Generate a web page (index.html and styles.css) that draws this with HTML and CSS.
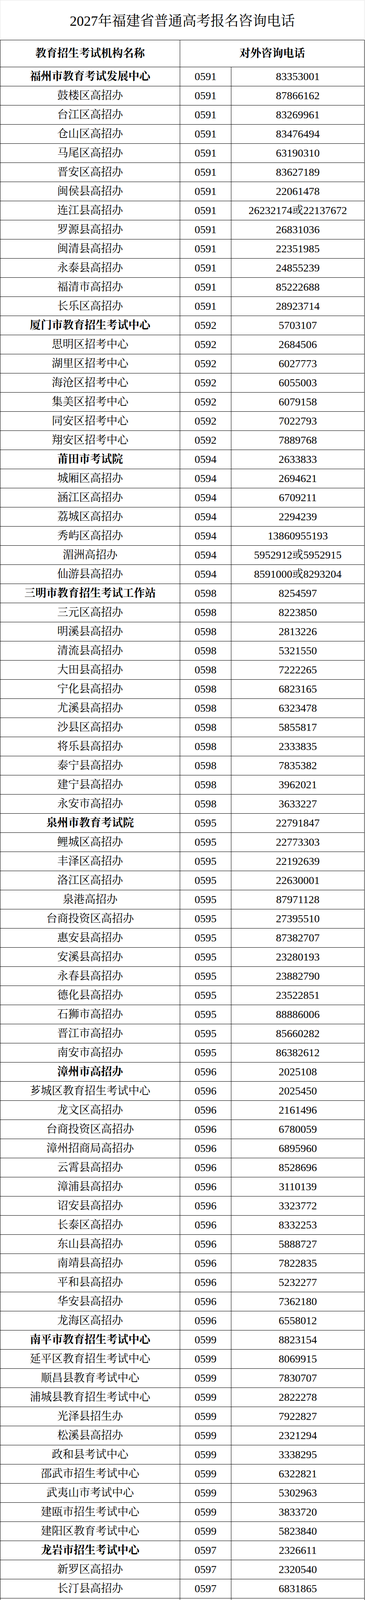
FILE: index.html
```html
<!DOCTYPE html>
<html lang="zh-CN">
<head>
<meta charset="utf-8">
<title>2027年福建省普通高考报名咨询电话</title>
<link rel="stylesheet" href="styles.css">
</head>
<body>
<div class="sheet">
  <div class="title">2027年福建省普通高考报名咨询电话</div>
  <div class="grid">
    <div class="cell head">教育招生考试机构名称</div><div class="cell head span2">对外咨询电话</div>
    <div class="cell b">福州市教育考试发展中心</div><div class="cell">0591</div><div class="cell">83353001</div>
    <div class="cell">鼓楼区高招办</div><div class="cell">0591</div><div class="cell">87866162</div>
    <div class="cell">台江区高招办</div><div class="cell">0591</div><div class="cell">83269961</div>
    <div class="cell">仓山区高招办</div><div class="cell">0591</div><div class="cell">83476494</div>
    <div class="cell">马尾区高招办</div><div class="cell">0591</div><div class="cell">63190310</div>
    <div class="cell">晋安区高招办</div><div class="cell">0591</div><div class="cell">83627189</div>
    <div class="cell">闽侯县高招办</div><div class="cell">0591</div><div class="cell">22061478</div>
    <div class="cell">连江县高招办</div><div class="cell">0591</div><div class="cell">26232174或22137672</div>
    <div class="cell">罗源县高招办</div><div class="cell">0591</div><div class="cell">26831036</div>
    <div class="cell">闽清县高招办</div><div class="cell">0591</div><div class="cell">22351985</div>
    <div class="cell">永泰县高招办</div><div class="cell">0591</div><div class="cell">24855239</div>
    <div class="cell">福清市高招办</div><div class="cell">0591</div><div class="cell">85222688</div>
    <div class="cell">长乐区高招办</div><div class="cell">0591</div><div class="cell">28923714</div>
    <div class="cell b">厦门市教育招生考试中心</div><div class="cell">0592</div><div class="cell">5703107</div>
    <div class="cell">思明区招考中心</div><div class="cell">0592</div><div class="cell">2684506</div>
    <div class="cell">湖里区招考中心</div><div class="cell">0592</div><div class="cell">6027773</div>
    <div class="cell">海沧区招考中心</div><div class="cell">0592</div><div class="cell">6055003</div>
    <div class="cell">集美区招考中心</div><div class="cell">0592</div><div class="cell">6079158</div>
    <div class="cell">同安区招考中心</div><div class="cell">0592</div><div class="cell">7022793</div>
    <div class="cell">翔安区招考中心</div><div class="cell">0592</div><div class="cell">7889768</div>
    <div class="cell b">莆田市考试院</div><div class="cell">0594</div><div class="cell">2633833</div>
    <div class="cell">城厢区高招办</div><div class="cell">0594</div><div class="cell">2694621</div>
    <div class="cell">涵江区高招办</div><div class="cell">0594</div><div class="cell">6709211</div>
    <div class="cell">荔城区高招办</div><div class="cell">0594</div><div class="cell">2294239</div>
    <div class="cell">秀屿区高招办</div><div class="cell">0594</div><div class="cell">13860955193</div>
    <div class="cell">湄洲高招办</div><div class="cell">0594</div><div class="cell">5952912或5952915</div>
    <div class="cell">仙游县高招办</div><div class="cell">0594</div><div class="cell">8591000或8293204</div>
    <div class="cell b">三明市教育招生考试工作站</div><div class="cell">0598</div><div class="cell">8254597</div>
    <div class="cell">三元区高招办</div><div class="cell">0598</div><div class="cell">8223850</div>
    <div class="cell">明溪县高招办</div><div class="cell">0598</div><div class="cell">2813226</div>
    <div class="cell">清流县高招办</div><div class="cell">0598</div><div class="cell">5321550</div>
    <div class="cell">大田县高招办</div><div class="cell">0598</div><div class="cell">7222265</div>
    <div class="cell">宁化县高招办</div><div class="cell">0598</div><div class="cell">6823165</div>
    <div class="cell">尤溪县高招办</div><div class="cell">0598</div><div class="cell">6323478</div>
    <div class="cell">沙县区高招办</div><div class="cell">0598</div><div class="cell">5855817</div>
    <div class="cell">将乐县高招办</div><div class="cell">0598</div><div class="cell">2333835</div>
    <div class="cell">泰宁县高招办</div><div class="cell">0598</div><div class="cell">7835382</div>
    <div class="cell">建宁县高招办</div><div class="cell">0598</div><div class="cell">3962021</div>
    <div class="cell">永安市高招办</div><div class="cell">0598</div><div class="cell">3633227</div>
    <div class="cell b">泉州市教育考试院</div><div class="cell">0595</div><div class="cell">22791847</div>
    <div class="cell">鲤城区高招办</div><div class="cell">0595</div><div class="cell">22773303</div>
    <div class="cell">丰泽区高招办</div><div class="cell">0595</div><div class="cell">22192639</div>
    <div class="cell">洛江区高招办</div><div class="cell">0595</div><div class="cell">22630001</div>
    <div class="cell">泉港高招办</div><div class="cell">0595</div><div class="cell">87971128</div>
    <div class="cell">台商投资区高招办</div><div class="cell">0595</div><div class="cell">27395510</div>
    <div class="cell">惠安县高招办</div><div class="cell">0595</div><div class="cell">87382707</div>
    <div class="cell">安溪县高招办</div><div class="cell">0595</div><div class="cell">23280193</div>
    <div class="cell">永春县高招办</div><div class="cell">0595</div><div class="cell">23882790</div>
    <div class="cell">德化县高招办</div><div class="cell">0595</div><div class="cell">23522851</div>
    <div class="cell">石狮市高招办</div><div class="cell">0595</div><div class="cell">88886006</div>
    <div class="cell">晋江市高招办</div><div class="cell">0595</div><div class="cell">85660282</div>
    <div class="cell">南安市高招办</div><div class="cell">0595</div><div class="cell">86382612</div>
    <div class="cell b">漳州市高招办</div><div class="cell">0596</div><div class="cell">2025108</div>
    <div class="cell">芗城区教育招生考试中心</div><div class="cell">0596</div><div class="cell">2025450</div>
    <div class="cell">龙文区高招办</div><div class="cell">0596</div><div class="cell">2161496</div>
    <div class="cell">台商投资区高招办</div><div class="cell">0596</div><div class="cell">6780059</div>
    <div class="cell">漳州招商局高招办</div><div class="cell">0596</div><div class="cell">6895960</div>
    <div class="cell">云霄县高招办</div><div class="cell">0596</div><div class="cell">8528696</div>
    <div class="cell">漳浦县高招办</div><div class="cell">0596</div><div class="cell">3110139</div>
    <div class="cell">诏安县高招办</div><div class="cell">0596</div><div class="cell">3323772</div>
    <div class="cell">长泰区高招办</div><div class="cell">0596</div><div class="cell">8332253</div>
    <div class="cell">东山县高招办</div><div class="cell">0596</div><div class="cell">5888727</div>
    <div class="cell">南靖县高招办</div><div class="cell">0596</div><div class="cell">7822835</div>
    <div class="cell">平和县高招办</div><div class="cell">0596</div><div class="cell">5232277</div>
    <div class="cell">华安县高招办</div><div class="cell">0596</div><div class="cell">7362180</div>
    <div class="cell">龙海区高招办</div><div class="cell">0596</div><div class="cell">6558012</div>
    <div class="cell b">南平市教育招生考试中心</div><div class="cell">0599</div><div class="cell">8823154</div>
    <div class="cell">延平区教育招生考试中心</div><div class="cell">0599</div><div class="cell">8069915</div>
    <div class="cell">顺昌县教育考试中心</div><div class="cell">0599</div><div class="cell">7830707</div>
    <div class="cell">浦城县教育招生考试中心</div><div class="cell">0599</div><div class="cell">2822278</div>
    <div class="cell">光泽县招生办</div><div class="cell">0599</div><div class="cell">7922827</div>
    <div class="cell">松溪县高招办</div><div class="cell">0599</div><div class="cell">2321294</div>
    <div class="cell">政和县考试中心</div><div class="cell">0599</div><div class="cell">3338295</div>
    <div class="cell">邵武市招生考试中心</div><div class="cell">0599</div><div class="cell">6322821</div>
    <div class="cell">武夷山市考试中心</div><div class="cell">0599</div><div class="cell">5302963</div>
    <div class="cell">建瓯市招生考试中心</div><div class="cell">0599</div><div class="cell">3833720</div>
    <div class="cell">建阳区教育考试中心</div><div class="cell">0599</div><div class="cell">5823840</div>
    <div class="cell b">龙岩市招生考试中心</div><div class="cell">0597</div><div class="cell">2326611</div>
    <div class="cell">新罗区高招办</div><div class="cell">0597</div><div class="cell">2320540</div>
    <div class="cell">长汀县高招办</div><div class="cell">0597</div><div class="cell">6831865</div>
    <div class="cell">永定区高招办</div><div class="cell">0597</div><div class="cell">5832935</div>
    <div class="cell">上杭县高招办</div><div class="cell">0597</div><div class="cell">3842625或3885703</div>
    <div class="cell">武平县高招办</div><div class="cell">0597</div><div class="cell">4822658</div>
    <div class="cell">连城县高招办</div><div class="cell">0597</div><div class="cell">8925320或8930261</div>
    <div class="cell">漳平县高招办</div><div class="cell">0597</div><div class="cell">7532525</div>
    <div class="cell b">宁德市高招办</div><div class="cell">0593</div><div class="cell">2915690或2915686</div>
    <div class="cell">蕉城区高招办</div><div class="cell">0593</div><div class="cell">2987052或2987066</div>
    <div class="cell">霞浦县高招办</div><div class="cell">0593</div><div class="cell">8893770或8899637</div>
    <div class="cell">古田县高招办</div><div class="cell">0593</div><div class="cell">3804097</div>
    <div class="cell">屏南县高招办</div><div class="cell">0593</div><div class="cell">3324550</div>
    <div class="cell">寿宁县高招办</div><div class="cell">0593</div><div class="cell">2177598或2177137</div>
    <div class="cell">周宁县高招办</div><div class="cell">0593</div><div class="cell">5628087</div>
    <div class="cell">柘荣县高招办</div><div class="cell">0593</div><div class="cell">8366099</div>
    <div class="cell">福安市高招办</div><div class="cell">0593</div><div class="cell">6383573</div>
    <div class="cell">福鼎市高招办</div><div class="cell">0593</div><div class="cell">7853491</div>
    <div class="cell b">平潭综合试验区教育考试院</div><div class="cell">0591</div><div class="cell">23151533</div>
  </div>
</div>
</body>
</html>
```

FILE: styles.css
```css
html, body {
  margin: 0;
  padding: 0;
  background: #ffffff;
}

body {
  font-family: "Liberation Serif", "Noto Serif CJK SC", "Noto Sans CJK SC", serif;
  color: #000000;
}

.sheet {
  width: 933px;
  height: 4876px;
  overflow: hidden;
}

.title {
  box-sizing: border-box;
  height: 102px;
  border: 1px solid #e4e4e4;
  border-bottom: none;
  display: flex;
  align-items: center;
  justify-content: center;
  font-size: 36px;
  line-height: 1;
  padding-top: 4px;
}

/* black background shows through the 1px gaps as cell rules */
.grid {
  display: grid;
  grid-template-columns: 459px 130px 340px;
  grid-template-rows: 68px;
  grid-auto-rows: 48px;
  gap: 1px;
  padding: 1px;
  background: #000000;
  width: 933px;
  box-sizing: border-box;
}

.cell {
  display: flex;
  align-items: center;
  justify-content: center;
  background: #ffffff;
  font-size: 28px;
  line-height: 1;
  white-space: nowrap;
  overflow: hidden;
}

.head {
  font-weight: bold;
}

.span2 {
  grid-column: 2 / 4;
}

.b {
  font-weight: bold;
}
```
